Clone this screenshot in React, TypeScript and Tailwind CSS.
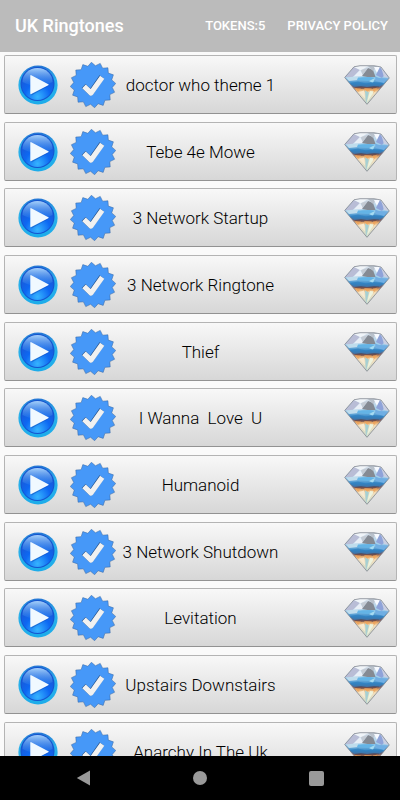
import React from "react";

const ringtones = [
  "doctor who theme 1",
  "Tebe 4e Mowe",
  "3 Network Startup",
  "3 Network Ringtone",
  "Thief",
  "I Wanna  Love  U",
  "Humanoid",
  "3 Network Shutdown",
  "Levitation",
  "Upstairs Downstairs",
  "Anarchy In The Uk",
];

function PlayIcon() {
  return (
    <svg className="block size-10" viewBox="0 0 40 40" aria-hidden="true">
      <circle cx="20" cy="20" r="19.600" fill="url(#ring)" />
      <circle cx="19.500" cy="19" r="17" fill="#1553cf" />
      <circle cx="19.500" cy="19" r="16" fill="url(#ball)" />
      <path d="M4.500 17a15 14 0 0 1 30 0q-8 4-15 4T4.500 17z" fill="url(#gloss)" />
      <path d="M13.500 12v18.500L31 20.500z" fill="#0a3aa8" opacity=".4" />
      <path d="M13.300 10.200q-1-.5-1 .7v17.400q0 1.200 1 .7l17-8.700q1-.6 0-1.100z" fill="#f0f9ff" />
    </svg>
  );
}

const sealPoints = Array.from({ length: 32 }, (_, i) => {
  const a = (i * Math.PI) / 16 - 0.07;
  const r = i % 2 ? 19.4 : 22.8;
  return `${(23 + r * Math.sin(a)).toFixed(2)},${(23 - r * Math.cos(a)).toFixed(2)}`;
}).join(" ");

function VerifiedIcon() {
  return (
    <svg className="block size-[46px]" viewBox="0 0 46 46" aria-hidden="true">
      <polygon points={sealPoints} fill="#4698f8" stroke="#35639c" strokeWidth=".5" strokeLinejoin="round" />
      <path d="M13.600 24l7.200 6.600L31.800 14.800" fill="none" stroke="#25548f" strokeWidth="5.600" strokeLinejoin="round" />
      <path d="M14 24.400l7 6.600L32.200 15.200" fill="none" stroke="#f1f1f1" strokeWidth="5.200" strokeLinejoin="round" />
    </svg>
  );
}

function DiamondIcon() {
  return (
    <svg className="block h-10 w-[46px]" viewBox="0 0 46 40" aria-hidden="true">
      <path d="M10 1.800L16 .700h14l7 1.300L45.300 13 23 39.300.700 12.500z" fill="url(#gem)" />
      <path d="M10 2L3 10l-2 2.500 8-.500 7-7z" fill="#b9bdd6" />
      <path d="M10 2l6-1h8l-7 4.500z" fill="#f0f4f8" />
      <path d="M16 5l-7 7 11-1z" fill="#e9eef6" />
      <path d="M24 3l-6 8 5.500 1h8l-2.500-7z" fill="#858a93" />
      <path d="M24 3l-7 2 1.500 5z" fill="#c4cad3" />
      <path d="M24 1h9l-4 5z" fill="#b9c1cb" />
      <path d="M30 2l3 6 3-6z" fill="#f7faff" />
      <path d="M36 2l-4 8 6 3 3-4z" fill="#8fa3d9" />
      <path d="M37 2l8 11-5-1z" fill="#c9cee2" />
      <path d="M2 12.500l9-1 7 .5-4 3-9 1z" fill="#bfdcec" />
      <path d="M14 12.500l12-.5 6 1-8 3-11-1z" fill="#64b4e6" />
      <path d="M31 11.500l4 1.500 9 .5-4 4.500-8-2z" fill="#70aee3" />
      <path d="M21 14l4 2 6-3-2 5z" fill="#a5dbf2" />
      <path d="M6 18l8-1.500 8 2 8-1.500 9 1-3.500 4H10z" fill="#317fbd" opacity=".7" />
      <path d="M10 22l7-1 6 1 7-1 5.500.500-3 2.500-9-.5-10 .5z" fill="#573d45" opacity=".6" />
      <path d="M11 23l6 .5-3 3.500zM20 23l8 .5-5 3.500zM29 23.500l5-1-5 6z" fill="#efa45a" opacity=".8" />
      <path d="M15 27l5-1.500 1 8z" fill="#f8ead1" />
      <path d="M21 25.500l4 2-3 11z" fill="#a6d0d3" />
      <path d="M26 26l4 .5-7 11z" fill="#edf4df" />
      <path d="M10 1.800L16 .700h14l7 1.300L45.300 13 23 39.300.700 12.500z" fill="none" stroke="#777d86" strokeWidth=".7" />
    </svg>
  );
}

function PaintDefinitions() {
  return (
    <svg className="absolute size-0" aria-hidden="true">
      <defs>
        <linearGradient id="ring" x1="0" y1="0" x2="0" y2="1">
          <stop offset="0" stopColor="#2474d4" />
          <stop offset=".35" stopColor="#2bb0ea" />
          <stop offset="1" stopColor="#1cacea" />
        </linearGradient>
        <radialGradient id="ball" cx=".5" cy=".9" r=".8">
          <stop offset="0" stopColor="#36b4ff" />
          <stop offset=".5" stopColor="#0d68f2" />
          <stop offset="1" stopColor="#1c56d2" />
        </radialGradient>
        <linearGradient id="gloss" x1="0" y1="0" x2="0" y2="1">
          <stop offset="0" stopColor="#b4deff" stopOpacity=".9" />
          <stop offset="1" stopColor="#3c92f0" stopOpacity=".15" />
        </linearGradient>
        <linearGradient id="gem" x1="0" y1="0" x2="0" y2="1">
          <stop offset="0" stopColor="#dce1ea" />
          <stop offset=".3" stopColor="#9fcde9" />
          <stop offset=".47" stopColor="#3387c8" />
          <stop offset=".55" stopColor="#775660" />
          <stop offset=".62" stopColor="#e6ab6d" />
          <stop offset=".7" stopColor="#f3dfbd" />
          <stop offset="1" stopColor="#c5d9ce" />
        </linearGradient>
      </defs>
    </svg>
  );
}

function RingtoneRow({ name }: { name: string }) {
  return (
    <li className="mb-2 grid h-[59px] shrink-0 grid-cols-[1fr_auto_1fr] items-center rounded-xs border border-[#b4b4b4] border-b-[#929292] bg-linear-to-b from-[#f8f8f8] to-[#d7d7d7] px-[6px] [&:nth-child(3n+2)]:mb-[7px]">
      <div className="flex w-0 items-center gap-3 pl-[7px]">
        <button type="button" aria-label={`Play ${name}`} className="shrink-0 rounded-full">
          <PlayIcon />
        </button>
        <button type="button" aria-label={`Set ${name}`} className="shrink-0">
          <VerifiedIcon />
        </button>
      </div>
      <span className="text-[17px] leading-6 font-[350] whitespace-pre text-black">{name}</span>
      <button type="button" aria-label={`Unlock ${name}`} className="justify-self-end">
        <DiamondIcon />
      </button>
    </li>
  );
}

export default function App() {
  return (
    <div className="flex h-screen flex-col overflow-hidden bg-[#fafafa] font-[Roboto,sans-serif]">
      <PaintDefinitions />
      <header className="flex h-[52px] shrink-0 items-center justify-between bg-[#bbb] pr-3 pl-[15px] text-white">
        <h1 className="text-[18px] leading-6 font-medium">UK Ringtones</h1>
        <div className="flex items-center gap-[22px] text-[13px] leading-6 font-medium">
          <button type="button">TOKENS:5</button>
          <button type="button">PRIVACY POLICY</button>
        </div>
      </header>
      <main className="min-h-0 flex-1 overflow-hidden">
        <ul className="flex flex-col pt-[3px] pr-[3px] pl-1">
          {ringtones.map((name) => (
            <RingtoneRow key={name} name={name} />
          ))}
        </ul>
      </main>
      <nav className="grid h-11 shrink-0 grid-cols-[1fr_auto_1fr] items-center bg-black px-[76px] text-[#999]">
        <button type="button" aria-label="Back" className="justify-self-start">
          <svg className="block size-4" viewBox="0 0 16 16" fill="currentColor">
            <path d="M.800 8L14 .600v14.800z" />
          </svg>
        </button>
        <button type="button" aria-label="Home" className="size-[14px] rounded-full bg-current" />
        <button type="button" aria-label="Recent apps" className="size-[15px] justify-self-end rounded-xs bg-current" />
      </nav>
    </div>
  );
}
